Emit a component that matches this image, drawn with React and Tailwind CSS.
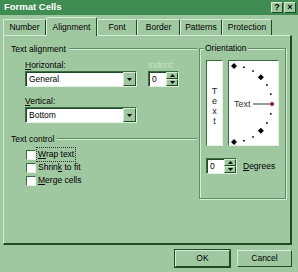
import React from 'react';

const lt = 'border-[#d6ecd6]';
const dk = 'border-[#1f4a24]';

const Arrow = ({ dir = 'down' }) => (
    <svg width="5" height="3" viewBox="0 0 5 3">
        {dir === 'down' ? <path d="M0 0h5L2.5 3z" fill="#000" /> : <path d="M0 3h5L2.5 0z" fill="#000" />}
    </svg>
);

const Combo = ({ value }) => (
    <div className="w-[112px] h-[16px] flex bg-white border-t border-l border-[#3d6b40] border-r border-b border-r-[#e4f2e4] border-b-[#e4f2e4] shadow-[inset_1px_1px_0_#1f4a24]">
        <div className="flex-1 flex items-center pl-[3px] text-[8.5px] text-black">{value}</div>
        <div className="w-[13px] h-full bg-[#a0c8a0] border-l border-t border-[#d6ecd6] border-r border-b border-r-[#1f4a24] border-b-[#1f4a24] flex items-center justify-center">
            <Arrow />
        </div>
    </div>
);

const Spinner = ({ w = 'w-[31px]' }) => (
    <div className={`${w} h-[16px] flex bg-white border-t border-l border-[#3d6b40] border-r border-b border-r-[#e4f2e4] border-b-[#e4f2e4] shadow-[inset_1px_1px_0_#1f4a24]`}>
        <div className="flex-1 flex items-center pl-[3px] text-[8.5px] text-black">0</div>
        <div className="w-[12px] h-full flex flex-col bg-[#a0c8a0]">
            <div className="flex-1 flex items-center justify-center border-l border-t border-[#d6ecd6] border-r border-b border-r-[#1f4a24] border-b-[#1f4a24]"><Arrow dir="up" /></div>
            <div className="flex-1 flex items-center justify-center border-l border-t border-[#d6ecd6] border-r border-b border-r-[#1f4a24] border-b-[#1f4a24]"><Arrow /></div>
        </div>
    </div>
);

const GroupHead = ({ children }) => (
    <div className="flex items-center h-[12px] gap-[3px]">
        <span className="text-[8.5px] text-black whitespace-nowrap">{children}</span>
        <div className="flex-1 h-[2px] border-t border-[#5e8f62] border-b border-b-[#d6ecd6]" />
    </div>
);

const Check = ({ label, u, focus }) => {
    const i = label.indexOf(u);
    return (
        <div className="flex items-center gap-[1px] h-[13px]">
            <div className="w-[10px] h-[10px] bg-white border-t border-l border-[#3d6b40] border-r border-b border-r-[#e4f2e4] border-b-[#e4f2e4]" />
            <span className={`text-[8.5px] text-black px-[1px] ${focus ? 'outline outline-1 outline-dotted outline-[#333]' : ''}`}>
                {label.slice(0, i)}<span className="underline">{u}</span>{label.slice(i + 1)}
            </span>
        </div>
    );
};

const Dial = () => {
    const cx = 5, cy = 43, r = 38;
    const dots = [];
    for (let a = -90; a <= 90; a += 15) {
        const rad = (a * Math.PI) / 180;
        const x = cx + r * Math.cos(rad);
        const y = cy - r * Math.sin(rad);
        const big = Math.abs(a) === 90 || Math.abs(a) === 45;
        if (a === 0) dots.push(<path key={a} d={`M${x} ${y - 2.5}l2.5 2.5l-2.5 2.5l-2.5 -2.5z`} fill="#8a1c24" />);
        else if (big) dots.push(<path key={a} d={`M${x} ${y - 3}l3 3l-3 3l-3 -3z`} fill="#000" />);
        else dots.push(<rect key={a} x={x - 0.8} y={y - 0.8} width="1.6" height="1.6" fill="#000" />);
    }
    return (
        <svg width="49" height="84" viewBox="0 0 49 84" className="block">
            {dots}
            <line x1="24" y1="43" x2="41" y2="43" stroke="#333" strokeWidth="1" />
            <text x="5" y="46" fontSize="9" fontFamily="Liberation Sans, Arial, sans-serif" fill="#333">Text</text>
        </svg>
    );
};

export default function App() {
    return (
        <div className="w-[298px] h-[272px] bg-[#a0c8a0] flex flex-col overflow-hidden" style={{ fontFamily: '"Liberation Sans", Arial, sans-serif' }}>
            {/* Title bar */}
            <div className="h-[16px] bg-[#3f8d52] flex items-center pl-[4px] pr-[2px] border-b border-[#a0c8a0]">
                <span className="text-white font-bold text-[9.5px]">Format Cells</span>
                <div className="ml-auto flex gap-[1px]">
                    <div className="w-[12px] h-[11px] bg-[#a0c8a0] border-l border-t border-[#d6ecd6] border-r border-b border-r-[#1f4a24] border-b-[#1f4a24] flex items-center justify-center text-[9px] font-bold leading-none text-black">?</div>
                    <div className="w-[12px] h-[11px] bg-[#a0c8a0] border-l border-t border-[#d6ecd6] border-r border-b border-r-[#1f4a24] border-b-[#1f4a24] flex items-center justify-center text-[9px] font-bold leading-none text-black">×</div>
                </div>
            </div>

            {/* Tabs */}
            <div className="flex items-end h-[19px] px-[3px]">
                {['Number', 'Alignment', 'Font', 'Border', 'Patterns', 'Protection'].map((t, i) => {
                    const sel = i === 1;
                    const widths = ['w-[43px]', 'w-[51px]', 'w-[40px]', 'w-[43px]', 'w-[42px]', 'w-[50px]'];
                    return (
                        <div
                            key={t}
                            className={`${widths[i]} ${sel ? 'h-[19px] -mb-[1px] bg-[#a0c8a0] z-10' : 'h-[16px]'} flex items-center justify-center text-[8.5px] text-black border-t border-l ${lt} border-r border-r-[#1f4a24] rounded-t-[2px]`}
                        >
                            {t}
                        </div>
                    );
                })}
            </div>

            {/* Panel */}
            <div className={`mx-[3px] w-[289px] h-[210px] border-t border-l ${lt} border-r-2 border-b-2 border-r-[#1f4a24] border-b-[#1f4a24] flex pt-[7px] pl-[7px]`}>
                {/* Left column */}
                <div className="w-[186px] flex flex-col">
                    <GroupHead>Text alignment</GroupHead>
                    <div className="flex mt-[4px] pl-[14px]">
                        <div className="flex flex-col">
                            <span className="text-[8.5px] text-black h-[12px]"><span className="underline">H</span>orizontal:</span>
                            <Combo value="General" />
                            <span className="text-[8.5px] text-black h-[12px] mt-[8px]"><span className="underline">V</span>ertical:</span>
                            <Combo value="Bottom" />
                        </div>
                        <div className="flex flex-col ml-[11px]">
                            <span className="text-[8.5px] text-[#c6e2c6] h-[12px]">Indent:</span>
                            <Spinner />
                        </div>
                    </div>
                    <div className="mt-[10px]">
                        <GroupHead>Text control</GroupHead>
                    </div>
                    <div className="flex flex-col pl-[15px] mt-[3px] gap-[0px]">
                        <Check label="Wrap text" u="W" focus />
                        <Check label="Shrink to fit" u="k" />
                        <Check label="Merge cells" u="M" />
                    </div>
                </div>

                {/* Orientation */}
                <div className="relative w-[87px] h-[151px] mt-[5px] ml-[2px] border border-[#5e8f62] shadow-[1px_1px_0_#d6ecd6,inset_1px_1px_0_#d6ecd6] flex flex-col pt-[11px] pl-[6px]">
                    <span className="absolute -top-[7px] left-[4px] px-[1px] bg-[#a0c8a0] text-[8.5px] text-black leading-[12px]">Orientation</span>
                    <div className="flex gap-[5px]">
                        <div className="w-[17px] h-[86px] bg-white border-t border-l border-[#3d6b40] border-r border-b border-r-[#e4f2e4] border-b-[#e4f2e4] flex flex-col items-center justify-center text-[9px] leading-[10px] text-[#222] pt-[6px]">
                            <span>T</span><span>e</span><span>x</span><span>t</span>
                        </div>
                        <div className="w-[51px] h-[86px] bg-white border-t border-l border-[#3d6b40] border-r border-b border-r-[#e4f2e4] border-b-[#e4f2e4]">
                            <Dial />
                        </div>
                    </div>
                    <div className="flex items-center mt-[12px] gap-[6px]">
                        <Spinner />
                        <span className="text-[8.5px] text-black"><span className="underline">D</span>egrees</span>
                    </div>
                </div>
            </div>

            {/* Buttons */}
            <div className="flex justify-end gap-[7px] pr-[6px] mt-[5px]">
                {['OK', 'Cancel'].map(b => (
                    <div key={b} className={`w-[55px] h-[17px] flex items-center justify-center text-[8.5px] text-black border-t border-l ${lt} border-r border-b ${dk} border-r-[#1f4a24] border-b-[#1f4a24] ${b === 'OK' ? 'outline outline-1 outline-[#1f4a24]' : ''}`}>{b}</div>
                ))}
            </div>
        </div>
    );
}
